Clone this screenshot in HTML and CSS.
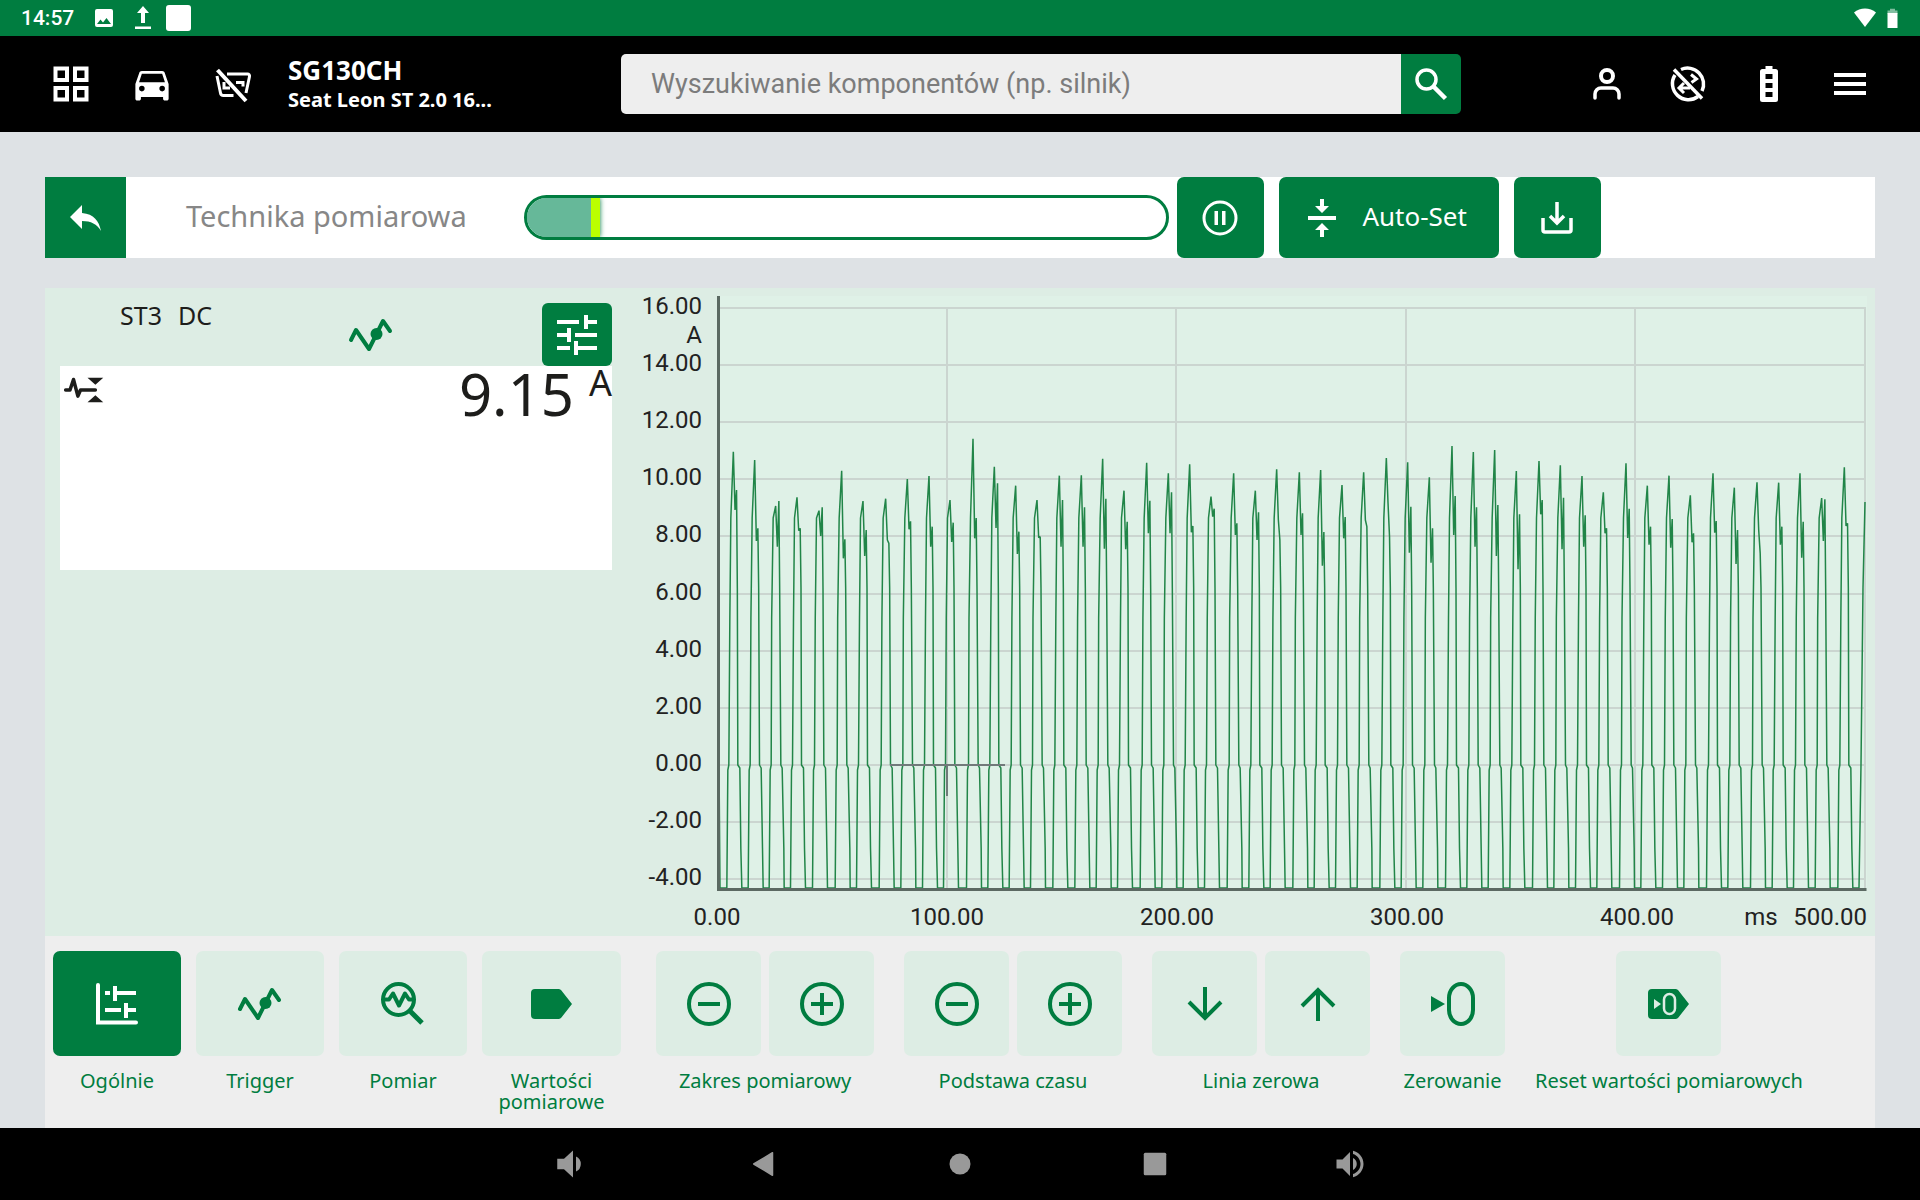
FILE: index.html
```html
<!DOCTYPE html>
<html lang="pl">
<head>
<meta charset="utf-8">
<meta name="viewport" content="width=device-width, initial-scale=1">
<title>Technika pomiarowa</title>
<link rel="stylesheet" href="styles.css">
</head>
<body>
<div class="status">
  <span class="clock">14:57</span>
  <svg class="status-icon" viewBox="0 0 24 24"><path d="M21 19V5a2 2 0 0 0-2-2H5a2 2 0 0 0-2 2v14a2 2 0 0 0 2 2h14a2 2 0 0 0 2-2zM8.500 13.500l2.500 3.010L14.500 12l4.500 6H5l3.500-4.500z"/></svg>
  <svg class="status-icon narrow" viewBox="0 0 18 24"><path d="M9 0l6 7h-4v10H7V7H3zM1 20.500h16V23H1z"/></svg>
  <span class="blank-app"></span>
  <svg class="status-icon wifi" viewBox="0 0 24 24"><path d="M12 21L1 6.500C4 4 8 2.500 12 2.500S20 4 23 6.500z"/></svg>
  <svg class="status-icon cell" viewBox="0 0 12 24"><path d="M3 1h6v2h3v4H0V3h3z" opacity=".5"/><path d="M0 6h12v18H0z"/></svg>
</div>

<header class="top">
  <div class="top-left">
    <button class="top-button" aria-label="Menu główne"><svg class="icon" viewBox="0 0 48 48"><g fill="none" stroke="currentColor" stroke-width="4"><path d="M8.500 8.500h11.500v11.500H8.500zM28 8.500h11.500v11.500H28zM8.500 28h11.500v11.500H8.500zM28 28h11.500v11.500H28z"/></g></svg></button>
    <button class="top-button" aria-label="Pojazd"><svg class="icon" viewBox="-1 -1 26 26"><path d="M18.920 6.010C18.720 5.420 18.160 5 17.500 5h-11c-.66 0-1.210.42-1.420 1.010L3 12v8c0 .55.45 1 1 1h1c.55 0 1-.45 1-1v-1h12v1c0 .55.45 1 1 1h1c.55 0 1-.45 1-1v-8zM6.500 16a1.500 1.500 0 1 1 0-3 1.500 1.500 0 0 1 0 3zm11 0a1.500 1.500 0 1 1 0-3 1.500 1.500 0 0 1 0 3zM5 11l1.500-4.500h11L19 11z"/></svg></button>
    <button class="top-button" aria-label="Brak połączenia z pojazdem"><svg class="icon" viewBox="0 0 48 48"><g fill="none" stroke="currentColor" stroke-width="3"><path d="M18 14h20.500a2 2 0 0 1 2 2.500L37 33M8 16l3.500 17a3 3 0 0 0 3 2.500h10"/><path d="M15 22v6h6M27 22.500h7v4"/><path d="M8.500 10l28.500 31" stroke-width="4"/></g></svg></button>
    <div class="vehicle"><strong class="plate">SG130CH</strong><strong class="model">Seat Leon ST 2.0 16...</strong></div>
  </div>
  <form class="search">
    <input class="search-input" type="search" placeholder="Wyszukiwanie komponentów (np. silnik)" aria-label="Wyszukiwanie komponentów">
    <button class="search-button" type="button" aria-label="Szukaj"><svg class="icon" viewBox="0 0 48 48"><g fill="none" stroke="currentColor" stroke-width="3.500"><circle cx="19.500" cy="19.500" r="9.500"/><path d="M26.500 26.500l12 12" stroke-width="4.500"/></g></svg></button>
  </form>
  <div class="top-right">
    <button class="top-button" aria-label="Użytkownik"><svg class="icon" viewBox="0 0 48 48"><g fill="none" stroke="currentColor" stroke-width="4"><circle cx="24" cy="16" r="6"/><path d="M12 38v-4a6 6 0 0 1 6-6h12a6 6 0 0 1 6 6v4" stroke-width="3.500" stroke-linecap="round"/></g></svg></button>
    <button class="top-button" aria-label="Brak połączenia"><svg class="icon" viewBox="0 0 48 48"><g fill="none" stroke="currentColor" stroke-width="3.500"><path d="M17 9.500A16 16 0 0 1 38 31M34 36.500A16 16 0 0 1 11 15"/><path d="M10 9.500l28 29"/><path d="M27 14.500l5.500 4.500-5 3.500M20 23l-5 5 5 5M15 28h11" stroke-width="3"/></g></svg></button>
    <button class="top-button" aria-label="Bateria"><svg class="icon" viewBox="0 0 48 48"><path fill-rule="evenodd" d="M20.500 6h7v3h3a2.500 2.500 0 0 1 2.500 2.500v28a2.500 2.500 0 0 1-2.500 2.500h-13a2.500 2.500 0 0 1-2.500-2.500v-28a2.500 2.500 0 0 1 2.500-2.500h3zM20.500 14v5h7v-5zM20.500 23v5h7v-5zM20.500 32v5h7v-5z"/></svg></button>
    <button class="top-button" aria-label="Menu"><svg class="icon" viewBox="0 0 48 48"><path d="M8 13h32v4H8zM8 22h32v4H8zM8 31h32v4H8z"/></svg></button>
  </div>
</header>

<main class="page">
  <section class="bar">
    <button class="back" aria-label="Wstecz"><svg class="icon" viewBox="0 0 48 48"><path d="M20 19v-8L8 23l12 12v-8c9 0 15 3 19 10-2-10-7-17-19-18z"/></svg></button>
    <h1 class="title">Technika pomiarowa</h1>
    <div class="progress" role="progressbar" aria-label="Bufor" aria-valuenow="10"><span class="progress-fill"></span></div>
    <div class="bar-buttons">
      <button class="action" aria-label="Pauza"><svg class="icon" viewBox="0 0 48 48"><circle cx="24" cy="24" r="16" fill="none" stroke="currentColor" stroke-width="3"/><path d="M18.500 17h3.500v14h-3.500zM26 17h3.500v14H26z"/></svg></button>
      <button class="action wide"><svg class="icon" viewBox="0 0 48 48"><path d="M10 22h28v4H10zM22 5h4v7h5l-7 7-7-7h5zM22 43h4v-7h5l-7-7-7 7h5z"/></svg><span class="action-text">Auto-Set</span></button>
      <button class="action" aria-label="Zapisz"><svg class="icon" viewBox="0 0 48 48"><g fill="none" stroke="currentColor" stroke-width="3.500"><path d="M10 24v12a2 2 0 0 0 2 2h24a2 2 0 0 0 2-2V24M24 8v20M17 22l7 7 7-7"/></g></svg></button>
    </div>
  </section>

  <section class="scope">
    <div class="channel">
      <div class="channel-head">
        <div class="channel-name"><span>ST3</span><span>DC</span></div>
        <svg class="icon green" viewBox="0 0 48 48"><use href="#wave"/></svg>
        <button class="settings" aria-label="Ustawienia kanału"><svg class="icon" viewBox="0 0 48 48"><path d="M4 9h22v4H4zM31 4h4v5h9v4h-9v5h-4zM4 22h10v-5h4v14h-4v-5H4zM22 22h22v4H22zM4 35h13v4H4zM21 30h4v5h19v4H25v5h-4z"/></svg></button>
      </div>
      <div class="reading">
        <svg class="reading-icon" viewBox="0 0 48 40"><path d="M3 20h5l4-12 5 19 3-7h17" fill="none" stroke="currentColor" stroke-width="4" stroke-linejoin="round" stroke-linecap="round"/><path d="M28 6h18l-9 8zM28 34h18l-9-8z"/></svg>
        <output class="value">9.15</output><span class="unit">A</span>
      </div>
    </div>
    <svg class="chart" viewBox="0 0 1235 648" role="img" aria-label="Przebieg prądu">
      <rect class="plot" x="79" y="8" width="1148" height="593"/>
      <g id="grid"></g>
      <path id="signal" class="signal"/>
      <path class="cursor" d="M250 477h115M307 477v31"/>
      <path class="axes" d="M78.500 8v593.500h1148"/>
    </svg>
  </section>

  <section class="tools">
    <div class="tool"><div class="tool-row"><button class="tool-button active" aria-labelledby="l1"><svg class="icon" viewBox="0 0 48 48"><path d="M5 5v37.500h38" fill="none" stroke="currentColor" stroke-width="4" stroke-linecap="round"/><path d="M12 11h5v4h-5zM20 6h4v5h19v4H24v6h-4zM12 28h16v4H12zM31 23h4v5h8v4h-8v6h-4z"/></svg></button></div><span class="tool-label" id="l1">Ogólnie</span></div>
    <div class="tool"><div class="tool-row"><button class="tool-button" aria-labelledby="l2"><svg class="icon" viewBox="0 0 48 48"><g id="wave"><path d="M4 29l5-10L22 38 36 10l7 10" fill="none" stroke="currentColor" stroke-width="4" stroke-linecap="round" stroke-linejoin="round"/><circle cx="29.500" cy="23" r="6"/></g></svg></button></div><span class="tool-label" id="l2">Trigger</span></div>
    <div class="tool"><div class="tool-row"><button class="tool-button" aria-labelledby="l3"><svg class="icon" viewBox="0 0 48 48"><g fill="none" stroke="currentColor" stroke-width="4"><circle cx="19.500" cy="19.500" r="15.500"/><path d="M6 19.500h4l4-6 6 12 6-12 4 6h3" stroke-linejoin="round"/><path d="M31 31l12 12" stroke-width="5"/></g></svg></button></div><span class="tool-label" id="l3">Pomiar</span></div>
    <div class="tool values"><div class="tool-row"><button class="tool-button" aria-labelledby="l4"><svg class="icon" viewBox="0 0 48 48"><path id="tag" d="M7 9h23a4 4 0 0 1 3 1l11 14-11 14a4 4 0 0 1-3 1H7a4 4 0 0 1-4-4V13a4 4 0 0 1 4-4z"/></svg></button></div><span class="tool-label" id="l4">Wartości pomiarowe</span></div>
    <div class="tool"><div class="tool-row"><button class="tool-button" aria-label="Zmniejsz zakres"><svg class="icon" viewBox="0 0 48 48"><g fill="none" stroke="currentColor" stroke-width="4"><path d="M13 24h22"/><circle cx="24" cy="24" r="20"/></g></svg></button><button class="tool-button" aria-label="Zwiększ zakres"><svg class="icon" viewBox="0 0 48 48"><g fill="none" stroke="currentColor" stroke-width="4"><path d="M13 24h22M24 13v22"/><circle cx="24" cy="24" r="20"/></g></svg></button></div><span class="tool-label">Zakres pomiarowy</span></div>
    <div class="tool"><div class="tool-row"><button class="tool-button" aria-label="Zmniejsz podstawę czasu"><svg class="icon" viewBox="0 0 48 48"><g fill="none" stroke="currentColor" stroke-width="4"><path d="M13 24h22"/><circle cx="24" cy="24" r="20"/></g></svg></button><button class="tool-button" aria-label="Zwiększ podstawę czasu"><svg class="icon" viewBox="0 0 48 48"><g fill="none" stroke="currentColor" stroke-width="4"><path d="M13 24h22M24 13v22"/><circle cx="24" cy="24" r="20"/></g></svg></button></div><span class="tool-label">Podstawa czasu</span></div>
    <div class="tool"><div class="tool-row"><button class="tool-button" aria-label="Linia zerowa w dół"><svg class="icon" viewBox="0 0 48 48"><path d="M24 7v31M8 22l16 16 16-16" fill="none" stroke="currentColor" stroke-width="4"/></svg></button><button class="tool-button" aria-label="Linia zerowa w górę"><svg class="icon" viewBox="0 0 48 48"><path d="M24 41V10M8 26l16-16 16 16" fill="none" stroke="currentColor" stroke-width="4"/></svg></button></div><span class="tool-label">Linia zerowa</span></div>
    <div class="tool"><div class="tool-row"><button class="tool-button" aria-labelledby="l8"><svg class="icon" viewBox="0 0 48 48"><path d="M2 16l14 8-14 8z"/><rect x="20" y="4" width="24" height="40" rx="12" ry="14" fill="none" stroke="currentColor" stroke-width="4"/></svg></button></div><span class="tool-label" id="l8">Zerowanie</span></div>
    <div class="tool"><div class="tool-row"><button class="tool-button" aria-labelledby="l9"><svg class="icon" viewBox="0 0 48 48"><use href="#tag"/><g class="cutout"><path d="M9 19l7 5-7 5z" stroke="none"/><rect x="19" y="14" width="11" height="20" rx="5.500" fill="none" stroke-width="2.500"/></g></svg></button></div><span class="tool-label" id="l9">Reset wartości pomiarowych</span></div>
  </section>
</main>

<nav class="android">
  <button class="nav-button" aria-label="Ciszej"><svg class="nav-icon" viewBox="0 0 24 24"><path d="M3.500 8.500v7H8l6 5.500V3L8 8.500zM16 17a5.500 5.500 0 0 0 0-10z"/></svg></button>
  <button class="nav-button" aria-label="Wstecz"><svg class="nav-icon" viewBox="0 0 24 24"><path d="M17 4.500v15L4.500 12z" stroke="currentColor" stroke-linejoin="round"/></svg></button>
  <button class="nav-button" aria-label="Ekran główny"><svg class="nav-icon" viewBox="0 0 24 24"><circle cx="12" cy="12" r="7"/></svg></button>
  <button class="nav-button" aria-label="Ostatnie"><svg class="nav-icon" viewBox="0 0 24 24"><rect x="4.500" y="4.500" width="15" height="15" rx="1"/></svg></button>
  <button class="nav-button" aria-label="Głośniej"><svg class="nav-icon" viewBox="0 0 24 24"><path d="M3 9v6h4l5 5V4L7 9zM16.500 12A4.500 4.500 0 0 0 14 7.970v8.050c1.480-.73 2.500-2.250 2.500-4.020zM14 3.230v2.060c2.890.86 5 3.540 5 6.710s-2.110 5.850-5 6.710v2.060c4.010-.91 7-4.490 7-8.770s-2.990-7.860-7-8.770z"/></svg></button>
</nav>
<script src="chart.js"></script>
</body>
</html>
```
FILE: styles.css
```css
:root {
  --green: #007d40;
  --mint: #ddede4;
}
* { box-sizing: border-box; }
body {
  margin: 0;
  min-height: 100vh;
  display: flex;
  flex-direction: column;
  background: #dee2e5;
  color: #1d1d1b;
  font-family: "Noto Sans", "Open Sans", sans-serif;
}
button {
  margin: 0;
  padding: 0;
  border: 0;
  background: none;
  color: inherit;
  font: inherit;
  display: flex;
  align-items: center;
  justify-content: center;
}
svg { fill: currentColor; flex: none; }
.icon { width: 48px; height: 48px; display: block; }
.green { color: var(--green); }

.status {
  height: 36px;
  padding: 0 21px;
  display: flex;
  align-items: center;
  background: var(--green);
  color: #fff;
}
.clock { font: 500 21px/36px Roboto, sans-serif; }
.status-icon { height: 24px; width: 24px; margin-left: 18px; }
.status-icon.narrow { width: 18px; }
.blank-app { width: 25px; height: 26px; margin-left: 14px; border-radius: 3px; background: #fff; }
.status-icon.wifi { margin-left: auto; }
.status-icon.cell { width: 11px; height: 20px; margin: 0 1px 0 10px; }

.top {
  height: 96px;
  padding: 0 30px;
  display: grid;
  grid-template-columns: 591fr 840fr 429fr;
  align-items: center;
  background: #000;
  color: #fff;
}
.top-left, .top-right { display: flex; align-items: center; }
.top-right { justify-content: flex-end; }
.top-button { width: 81px; height: 81px; }
.vehicle { display: flex; flex-direction: column; padding-left: 15px; }
.plate { font-size: 26px; line-height: 32px; }
.model { font-size: 20px; line-height: 28px; }
.search { display: flex; height: 60px; margin: 0; }
.search-input {
  flex: 1;
  min-width: 0;
  padding: 0 30px;
  border: 0;
  border-radius: 5px 0 0 5px;
  background: #eee;
  font: 27px Roboto, sans-serif;
}
.search-input::placeholder { color: #7c7c7c; opacity: 1; }
.search-button { width: 60px; border-radius: 0 5px 5px 0; background: var(--green); }

.page { flex: 1; display: flex; flex-direction: column; padding: 45px 45px 0; }
.bar { height: 81px; display: flex; align-items: center; background: #fff; margin-bottom: 30px; }
.back { width: 81px; height: 81px; background: var(--green); color: #fff; }
.title { margin: 0 57px 4px 60px; font-size: 29px; font-weight: 400; color: #878787; white-space: nowrap; }
.progress {
  flex: 0 1 645px;
  height: 45px;
  margin-right: 8px;
  border: 3px solid var(--green);
  border-radius: 23px;
  background: #fff;
  overflow: hidden;
}
.progress-fill {
  display: block;
  width: 11.5%;
  height: 100%;
  border-right: 9px solid #bf0;
  background: #66b899;
  box-shadow: 0 0 5px var(--green);
}
.bar-buttons { display: flex; gap: 15px; }
.action { width: 87px; height: 81px; border-radius: 7px; background: var(--green); color: #fff; font-size: 26px; }
.action.wide { width: 220px; gap: 16px; padding-right: 12px; }
.action-text { padding-bottom: 4px; }

.scope { display: grid; grid-template-columns: 595fr 1235fr; align-items: start; background: var(--mint); }
.channel { padding: 15px 28px 0 15px; }
.channel-head { display: grid; grid-template-columns: 275px 72px 1fr; align-items: center; justify-items: center; height: 63px; }
.channel-name { align-self: start; justify-self: start; display: flex; gap: 16px; padding-left: 60px; font-size: 25px; line-height: 24px; }
.settings { justify-self: end; width: 70px; height: 63px; border-radius: 6px; background: var(--green); color: #fff; }
.reading { min-height: 204px; display: flex; align-items: flex-start; background: #fff; }
.reading-icon { width: 42px; height: 36px; margin: 6px auto 0 3px; }
.value { font-size: 58px; line-height: 56px; }
.unit { margin-left: 15px; font-size: 36px; line-height: 34px; }
.chart { width: 100%; display: block; }
.chart text { font: 24px Roboto, sans-serif; fill: #222; }
.plot { fill: #dff1e7; }
.grid-line { fill: none; stroke: #cbd5d0; stroke-width: 2; }
.signal { fill: none; stroke: #218548; stroke-width: 1.5; stroke-linejoin: bevel; }
.cursor { fill: none; stroke: #71797a; stroke-width: 2; }
.axes { fill: none; stroke: #5b6962; stroke-width: 3; }

.tools { flex: 1; display: flex; gap: 30px; padding: 15px 8px; background: #eee; color: var(--green); }
.tool { display: flex; flex-direction: column; align-items: center; }
.tool-row { display: flex; gap: 8px; }
.tool-button { width: 105px; height: 105px; border-radius: 7px; background: var(--mint); }
.tool:nth-child(-n+3) { margin-right: -15px; }
.tool:nth-child(-n+3) .tool-button { width: 128px; }
.values { width: 139px; margin-right: 5px; }
.values .tool-button { width: 139px; }
.tool .tool-button.active { background: var(--green); color: #fff; }
.tool-label { margin-top: 14px; font-size: 20px; line-height: 21px; text-align: center; }
.cutout { fill: var(--mint); stroke: var(--mint); }

.android { height: 72px; display: flex; justify-content: center; background: #000; color: #999; }
.nav-button { width: 195px; }
.nav-icon { width: 36px; height: 36px; }
```
FILE: chart.js
```js
// Each pulse: x, peak, dip, shoulder, in thirds of a chart unit from the block's origin.
const blocks = [
  { x: -20, y: -8, pulses: [
    [340,515,690,630],[404,540,783,745],[467,678,800,663],[531,652,752,745],[597,692,768,682],
    [665,572,835,778],[729,663,828,750],[797,656,780,790],[862,597,748,724],[927,588,800,740],
    [990,660,786,728],[1059,476,775,714],[1123,560,744,610],[1187,617,822,755],[1251,660,773,770],
    [1318,587,800,660],[1384,586,800,682],[1448,536,806,656]] },
  { x: 460, y: 132, pulses: [
    [72,212,388,305],[140,128,340,242],[205,160,340,217],[269,133,337,318],[333,230,290,266],
    [401,160,345,310],[466,212,360,277],[530,148,300,360],[598,157,345,280],[662,150,437,336],
    [726,195,355,291],[791,157,300,320],[859,114,250,350],[923,127,398,260],[988,172,428,325],
    [1056,78,345,228],[1120,96,380,262],[1184,90,408,255]] },
  { x: 840, y: 132, pulses: [
    [109,153,448,283],[177,123,283,240],[241,136,388,233],[306,168,380,286],[370,217,340,325],
    [438,130,354,266],[502,197,374,320],[567,167,383,297],[631,226,367,340],[699,160,338,303],
    [763,203,432,330],[831,187,330,400],[896,188,374,320],[960,160,413,305],[1025,234,363,238],
    [1093,142,318,310]] }
];
const FLOOR = 600;
const ZERO = 477;
let d = `M79 ${ZERO}L80 ${FLOOR}`;
let index = 0;
for (const block of blocks) {
  for (const [px, ...levels] of block.pulses) {
    const x = block.x + px / 3;
    const [peak, dip, shoulder] = levels.map(v => block.y + v / 3);
    const drift = index % 3;
    d += `L${x - 6.500} ${FLOOR}L${x - 5.500} ${ZERO + 5}L${x - 4.500} ${ZERO}L${x - 3.500 - drift / 4} 330`
      + `L${x - 2.500} ${Math.min(peak + 85, 230)}L${x} ${peak}L${x + 1.700} ${dip}L${x + 3.200} ${shoulder}L${x + 4} 300`
      + `L${x + 4.500 + drift / 3} ${ZERO}L${x + 6.500} ${ZERO + 3}L${x + 7.500 + drift / 3} 560L${x + 8.500} ${FLOOR}`;
    index += 1;
  }
}
d += `L1219 ${FLOOR}L1221 ${ZERO}L1223 300L1225 214`;
document.getElementById("signal").setAttribute("d", d);

let grid = "";
for (let i = 0; i <= 10; i++) {
  const y = Math.round(20 + i * 57.100);
  grid += `<path class="grid-line" d="M80 ${y}H1226"/>`
    + `<text x="62" y="${y + 6}" text-anchor="end">${(16 - 2 * i).toFixed(2)}</text>`;
}
for (let i = 1; i <= 5; i++) {
  grid += `<path class="grid-line" d="M${Math.round(77 + i * 229.500)} 20V600"/>`;
}
for (let i = 0; i < 5; i++) {
  grid += `<text x="${Math.round(77 + i * 230)}" y="637" text-anchor="middle">${(100 * i).toFixed(2)}</text>`;
}
grid += '<text x="62" y="55" text-anchor="end">A</text>'
  + '<text x="1121" y="637" text-anchor="middle">ms</text>'
  + '<text x="1227" y="637" text-anchor="end">500.00</text>';
document.getElementById("grid").innerHTML = grid;
```
